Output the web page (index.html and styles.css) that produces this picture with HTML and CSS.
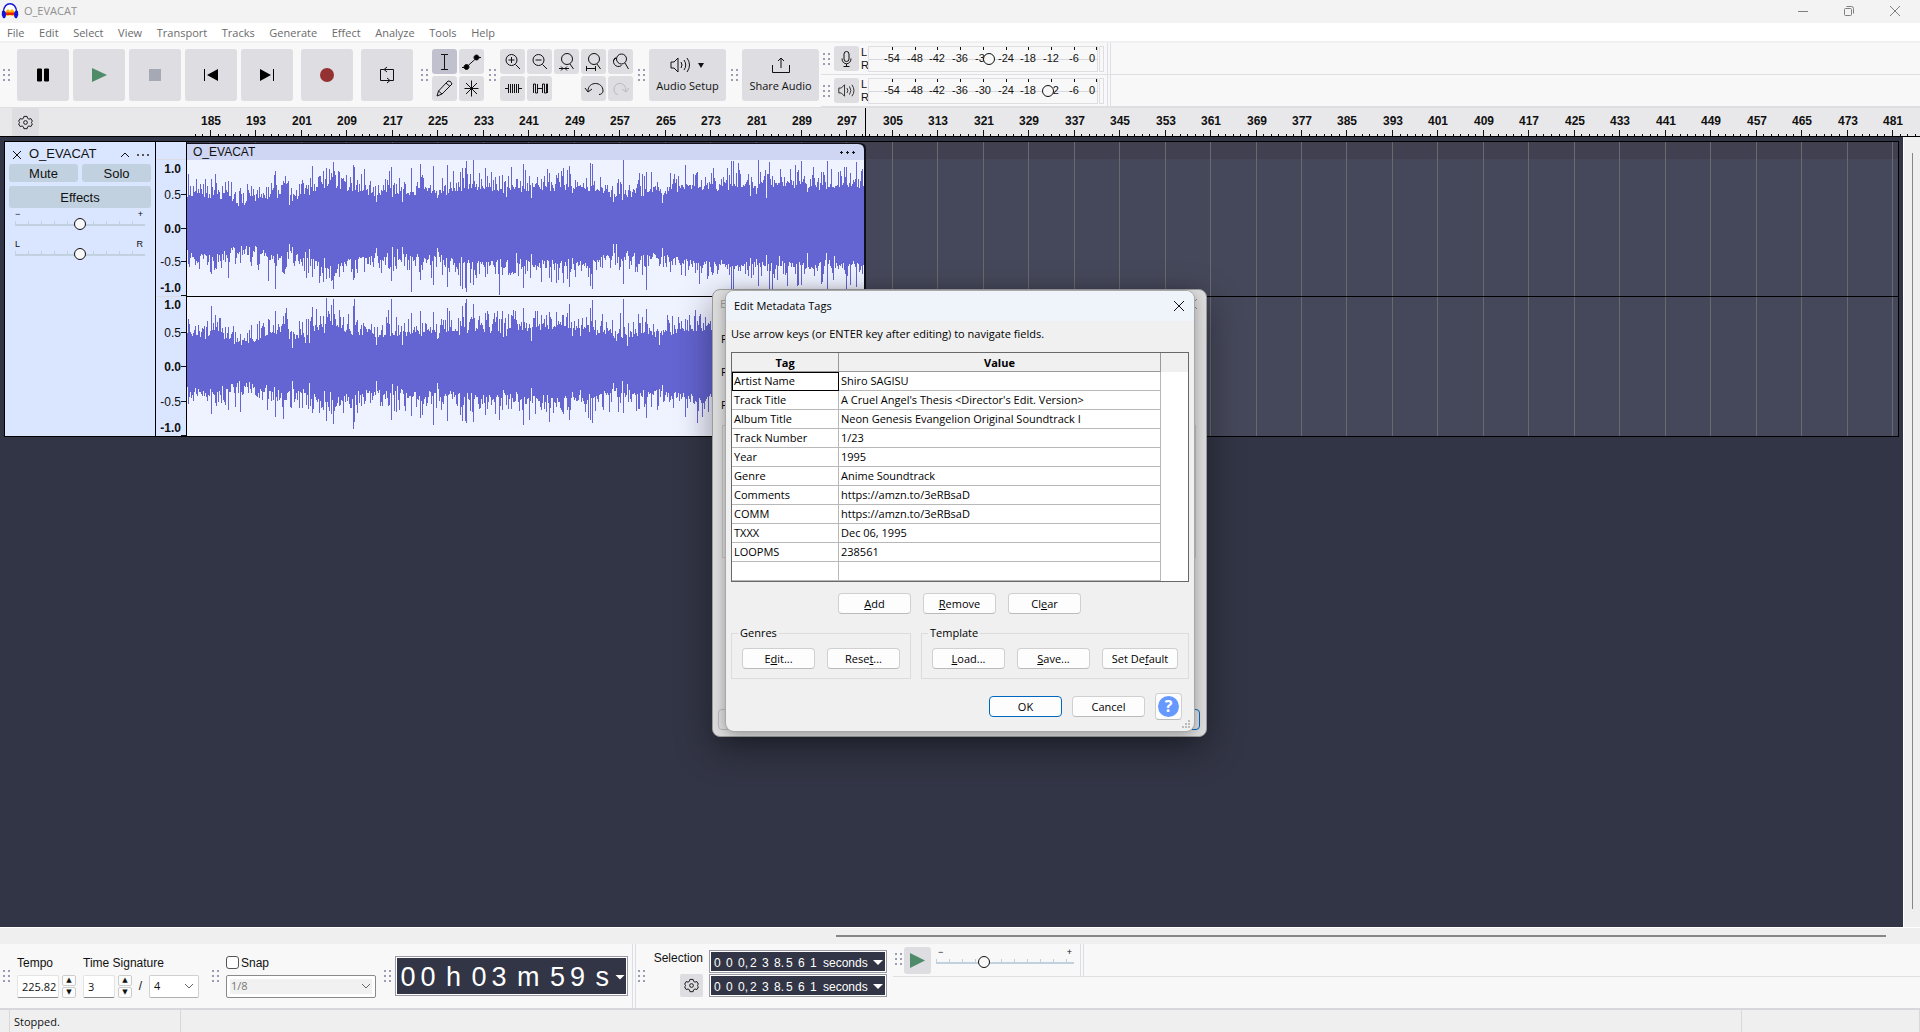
FILE: index.html
```html
<!DOCTYPE html>
<html lang="en">
<head>
<meta charset="utf-8">
<title>O_EVACAT</title>
<link rel="stylesheet" href="styles.css">
</head>
<body>
<svg class="defs" aria-hidden="true">
  <symbol id="i-mag" viewBox="0 0 25 25"><circle cx="11.500" cy="11" r="5.500"/><path d="M15.500 15.500l4.500 4.500"/></symbol>
  <symbol id="i-gear" viewBox="0 0 16 16"><path d="M6.300 1.500h3.400l.5 2 1.500.9 2-.6 1.700 2.900-1.500 1.300 1.500 1.400-1.700 2.900-2-.6-1.500.9-.5 2H6.300l-.5-2-1.500-.9-2 .6L.6 9.400 2.100 8 .6 6.700l1.700-2.900 2 .6 1.500-.9z"/><circle cx="8" cy="8" r="2"/></symbol>
  <symbol id="i-speaker" viewBox="0 0 22 18"><path d="M1 6h3l4-4v14l-4-4H1z"/><path d="M11 6q2 3 0 6M14 4q3.500 5 0 10M17 2q5 7 0 14"/></symbol>
</svg>

<header class="titlebar">
  <svg class="logo" viewBox="0 0 18 18"><path d="M2.500 10c0-11 13-11 13 0" fill="#fff" stroke="#1414d8" stroke-width="1.500"/><path d="M4 10l3-3 2 2 2-2 3 3v3l-3 1-2-1-2 1-3-1z" fill="#ffb000"/><path d="M5 10.500h8v2.500H5z" fill="#e8200c"/><path d="M1 9q4-1 4 3.500T2 16Q0 13 1 9zM17 9q-4-1-4 3.500t3 3.500q2-3 1-7z" fill="#1414d8"/></svg>
  <span>O_EVACAT</span>
  <div class="winbtns">
    <button aria-label="Minimize"><svg viewBox="0 0 12 12"><path d="M1 6.500h10"/></svg></button>
    <button aria-label="Restore"><svg viewBox="0 0 12 12"><rect x="1.500" y="3.500" width="7" height="7" rx="1"/><path d="M3.500 1.500h5a2 2 0 0 1 2 2v5"/></svg></button>
    <button aria-label="Close"><svg viewBox="0 0 12 12"><path d="M1 1l10 10M11 1L1 11"/></svg></button>
  </div>
</header>

<nav class="menubar">
  <div class="menus"><a href="#">File</a><a href="#">Edit</a><a href="#">Select</a><a href="#">View</a><a href="#">Transport</a><a href="#">Tracks</a><a href="#">Generate</a><a href="#">Effect</a><a href="#">Analyze</a><a href="#">Tools</a><a href="#">Help</a></div>
</nav>

<section class="toolbar top">
  <i class="grip"></i>
  <div class="transport">
    <button aria-label="Pause"><svg viewBox="0 0 52 52"><path d="M20.500 20h4v12h-4zM27.500 20h4v12h-4z" stroke="#000" stroke-linejoin="round"/></svg></button>
    <button aria-label="Play"><svg viewBox="0 0 52 52"><path d="M19 19l15 7-15 7z" fill="#4d8b69"/></svg></button>
    <button aria-label="Stop"><svg viewBox="0 0 52 52"><path d="M20 20h12v12H20z" fill="#a5a9b4"/></svg></button>
    <button aria-label="Skip to start"><svg viewBox="0 0 52 52"><path d="M33 20v12l-11-6zM19 20h1v12h-1z"/></svg></button>
    <button aria-label="Skip to end"><svg viewBox="0 0 52 52"><path d="M19 20v12l11-6zM32 20h1v12h-1z"/></svg></button>
    <button class="apart" aria-label="Record"><svg viewBox="0 0 52 52"><circle cx="26" cy="26" r="7" fill="#943232"/></svg></button>
    <button class="apart" aria-label="Loop"><svg viewBox="0 0 52 52"><path d="M23 20.500h-3.500v11h9M29 31.500h3.500v-11h-9M26 18l-3 2.500 3 2.500M26 29l3 2.500-3 2.500" fill="none" stroke="#111"/></svg></button>
  </div>
  <i class="grip g8"></i>
  <div class="tools two">
    <button class="on" aria-label="Selection tool"><svg viewBox="0 0 25 25"><path d="M9 5.500h3.500H16M9 20.500h7M12.500 5.500v15"/></svg></button>
    <button aria-label="Envelope tool"><svg viewBox="0 0 25 25"><path d="M3 18.500h4l11-10h4"/><path d="M7.500 15.500a2.500 2.500 0 1 1-.01 0zM17.500 6a2.500 2.500 0 1 1-.01 0z" fill="#000"/></svg></button>
    <button aria-label="Draw tool"><svg viewBox="0 0 25 25"><path d="M5 20l1.500-5L16 5q3-.5 4 3l-10 10zM6.500 15l3.500 3M14 7l4 3.500"/></svg></button>
    <button aria-label="Multi-tool"><svg viewBox="0 0 25 25"><path d="M12.500 4.500v16M5.500 12.500h14M7 18l11-11M7 7l11 11"/></svg></button>
  </div>
  <i class="grip"></i>
  <div class="tools five">
    <button aria-label="Zoom in"><svg viewBox="0 0 25 25"><use href="#i-mag"/><path d="M8.500 11h6M11.500 8v6"/></svg></button>
    <button aria-label="Zoom out"><svg viewBox="0 0 25 25"><use href="#i-mag"/><path d="M8.500 11h6"/></svg></button>
    <button aria-label="Fit selection"><svg viewBox="0 0 25 25"><circle cx="13" cy="10" r="5.500"/><path d="M16 15l3.500 5M5 19.500h10M7 17.500l2 2-2 2M13 17.500l-2 2 2 2"/></svg></button>
    <button aria-label="Fit project"><svg viewBox="0 0 25 25"><circle cx="13" cy="10" r="5.500"/><path d="M16 15l3.500 5M5.500 19.500h9M5.500 17v5M14.500 17v5"/></svg></button>
    <button aria-label="Zoom toggle"><svg viewBox="0 0 25 25"><circle cx="13.500" cy="10" r="5"/><path d="M7.500 8.500a5 5 0 1 0 6 8M17 14l3.500 6M8 9l-3 3"/></svg></button>
    <button aria-label="Trim"><svg viewBox="0 0 25 25"><path d="M5 12.500h3.500M18.500 12.500H22M8.500 8v9M10.500 8v9M12.500 8v9M14.500 8v9M16.500 8v9M18.500 8v9"/></svg></button>
    <button aria-label="Silence"><svg viewBox="0 0 25 25"><path d="M6.500 17V8h2v9h2V8M10.500 12.500h5M15.500 17V8h2v9h2V8h1v9"/></svg></button>
    <span></span>
    <button aria-label="Undo"><svg viewBox="0 0 25 25"><path d="M7 15c0-10 15-10 15 0 0 2-2 3.500-4 3.500M4 12l3 4 4-3"/></svg></button>
    <button class="off" aria-label="Redo"><svg viewBox="0 0 25 25"><path d="M18 15C18 5 6 5 6 14c0 2 1 4 4 4.500M21 12l-3 4-4-3"/></svg></button>
  </div>
  <i class="grip"></i>
  <button class="wide"><svg class="spk" viewBox="0 0 36 18"><use href="#i-speaker" width="22" height="18"/><path class="fill" d="M28 7h6l-3 5z"/></svg>Audio Setup</button>
  <i class="grip"></i>
  <button class="wide share"><svg viewBox="0 0 20 18"><path d="M1.500 9v7.500h17V9M10 12V2M7 5l3-3 3 3"/></svg>Share Audio</button>
  <div class="meters">
    <div class="meter-row">
      <i class="grip"></i>
      <button class="sq" aria-label="Record meter"><svg viewBox="0 0 25 25"><rect x="10" y="5.500" width="5" height="10" rx="2.500"/><path d="M8 12.500c0 7 9 7 9 0M12.500 18v2.500M9.500 20.500h6"/></svg></button>
      <div class="lr"><span>L</span><span>R</span></div>
      <div class="meter"><input type="range" aria-label="Recording volume" min="0" max="100" value="53"></div>
      <div class="clipbox"></div>
      <i class="edge"></i>
    </div>
    <div class="meter-row">
      <i class="grip"></i>
      <button class="sq" aria-label="Playback meter"><svg viewBox="0 0 25 25"><use href="#i-speaker" x="4" y="5" width="18" height="15"/></svg></button>
      <div class="lr"><span>L</span><span>R</span></div>
      <div class="meter"><input type="range" aria-label="Playback volume" min="0" max="100" value="80"></div>
      <div class="clipbox"></div>
      <i class="edge"></i>
    </div>
  </div>
</section>

<section class="ruler">
  <button class="gearbox" aria-label="Timeline options"><svg viewBox="0 0 16 16"><use href="#i-gear"/></svg></button>
  <svg id="timeline"></svg>
</section>

<main class="workspace">
  <div class="tracks">
    <article class="track">
      <div class="panel">
        <div class="name"><button aria-label="Close track"><svg viewBox="0 0 10 10"><path d="M1 1l8 8M9 1L1 9"/></svg></button><span>O_EVACAT</span><button aria-label="Collapse"><svg viewBox="0 0 10 10"><path d="M1 7l4-4 4 4"/></svg></button><button aria-label="Track menu"><svg class="dots" viewBox="0 0 12 10"><path d="M0 5h2M5 5h2M10 5h2" stroke-width="2"/></svg></button></div>
        <div class="pair"><button>Mute</button><button>Solo</button></div>
        <button class="fx">Effects</button>
        <label class="knob"><span><b>−</b><b>+</b></span><input type="range" aria-label="Gain" value="50"></label>
        <label class="knob pan"><span><b>L</b><b>R</b></span><input type="range" aria-label="Pan" value="50"></label>
      </div>
      <svg id="vruler"></svg>
      <svg id="canvas"></svg>
    </article>
  </div>
  <div class="vscroll"><i></i></div>
  <div class="hscroll"><i></i></div>
</main>

<section class="toolbar bottom">
  <i class="grip"></i>
  <div class="field tempo">
    <label for="tempo">Tempo</label>
    <div class="line"><input id="tempo" type="text" value="225.82"><span class="spin"><button aria-label="Up">▲</button><button aria-label="Down">▼</button></span></div>
  </div>
  <div class="field sig">
    <label for="beats">Time Signature</label>
    <div class="line"><input id="beats" type="text" value="3"><span class="spin"><button aria-label="Up">▲</button><button aria-label="Down">▼</button></span><span class="slash">/</span><select aria-label="Beat unit"><option>4</option></select></div>
  </div>
  <i class="grip g12"></i>
  <div class="field snap">
    <label><input type="checkbox">Snap</label>
    <select aria-label="Snap to" disabled><option>1/8</option></select>
  </div>
  <i class="grip g8"></i>
  <div class="bigtime"><span class="d">0</span><span class="d">0</span><span class="u">h</span><span class="d">0</span><span class="d">3</span><span class="u">m</span><span class="d">5</span><span class="d">9</span><span class="u">s</span><button class="tri" aria-label="Time format"></button></div>
  <i class="edge"></i>
  <i class="grip"></i>
  <div class="selhead"><span>Selection</span><button class="gearbox" aria-label="Selection options"><svg viewBox="0 0 16 16"><use href="#i-gear"/></svg></button></div>
  <div class="seltimes">
    <div class="seltime"><span>0</span><span>0</span><span class="p">0,</span><span>2</span><span>3</span><span class="p">8.</span><span>5</span><span>6</span><span>1</span><em>seconds</em><button class="tri" aria-label="Start format"></button></div>
    <div class="seltime"><span>0</span><span>0</span><span class="p">0,</span><span>2</span><span>3</span><span class="p">8.</span><span>5</span><span>6</span><span>1</span><em>seconds</em><button class="tri" aria-label="End format"></button></div>
  </div>
  <div class="speed">
    <div class="speed-row">
      <i class="grip"></i>
      <button class="play" aria-label="Play at speed"><svg viewBox="0 0 27 27"><path d="M6 6l15 7.500L6 21z"/></svg></button>
      <label class="knob"><span><b>−</b><b>+</b></span><input type="range" aria-label="Playback speed" value="33"></label>
      <i class="edge"></i>
    </div>
  </div>
</section>

<footer class="status"><span class="c1"></span><span class="c2">Stopped.</span><span class="c3"></span><span class="c4"></span></footer>

<div class="window back" aria-hidden="true">
  <div class="wtitle"><span>E</span><svg viewBox="0 0 12 12"><path d="M1 1l10 10M11 1L1 11"/></svg></div>
  <div class="bl"><span>F</span><span>F</span><span>F</span></div>
  <div class="bcombo"></div>
  <div class="bbox"></div>
  <div class="bfoot"><i></i><i class="blue"></i></div>
</div>

<section class="window dialog" role="dialog" aria-labelledby="dlg">
  <div class="wtitle"><span id="dlg">Edit Metadata Tags</span><button aria-label="Close"><svg viewBox="0 0 12 12"><path d="M1 1l10 10M11 1L1 11"/></svg></button></div>
  <div class="content">
    <p>Use arrow keys (or ENTER key after editing) to navigate fields.</p>
    <div class="gridbox">
      <table>
        <thead><tr><th>Tag</th><th>Value</th></tr></thead>
        <tbody>
          <tr><td class="cur">Artist Name</td><td>Shiro SAGISU</td></tr>
          <tr><td>Track Title</td><td>A Cruel Angel's Thesis &lt;Director's Edit. Version&gt;</td></tr>
          <tr><td>Album Title</td><td>Neon Genesis Evangelion Original Soundtrack I</td></tr>
          <tr><td>Track Number</td><td>1/23</td></tr>
          <tr><td>Year</td><td>1995</td></tr>
          <tr><td>Genre</td><td>Anime Soundtrack</td></tr>
          <tr><td>Comments</td><td>https://amzn.to/3eRBsaD</td></tr>
          <tr><td>COMM</td><td>https://amzn.to/3eRBsaD</td></tr>
          <tr><td>TXXX</td><td>Dec 06, 1995</td></tr>
          <tr><td>LOOPMS</td><td>238561</td></tr>
          <tr><td></td><td></td></tr>
        </tbody>
      </table>
    </div>
    <div class="row mid"><button><u>A</u>dd</button><button><u>R</u>emove</button><button>Cl<u>e</u>ar</button></div>
    <div class="groups">
      <fieldset><legend>Genres</legend><button>E<u>d</u>it...</button><button>Rese<u>t</u>...</button></fieldset>
      <fieldset><legend>Template</legend><button><u>L</u>oad...</button><button><u>S</u>ave...</button><button>Set De<u>f</u>ault</button></fieldset>
    </div>
    <div class="row end"><button class="ok">OK</button><button>Cancel</button><button class="help" aria-label="Help"><span>?</span></button></div>
  </div>
  <svg class="sizer" viewBox="0 0 9 9"><path d="M6 0h2v2H6zM3 3h2v2H3zM6 3h2v2H6zM0 6h2v2H0zM3 6h2v2H3zM6 6h2v2H6z"/></svg>
</section>
<script src="app.js"></script>
</body>
</html>
```
FILE: styles.css
```css
* { box-sizing: border-box; }
body {
  margin: 0;
  min-height: 100vh;
  display: flex;
  flex-direction: column;
  position: relative;
  overflow: hidden;
  background: #f8f8f8;
  color: #111;
  font: 12px/16px "Liberation Sans", Arial, sans-serif;
}
button, input, select { font: inherit; color: inherit; margin: 0; padding: 0; }
button { border: 0; background: #dddde2; display: flex; align-items: center; justify-content: center; }
svg { display: block; fill: none; stroke: #111; }
.defs { display: none; }
.fill { fill: #111; stroke: none; }

/* window chrome */
.titlebar { height: 23px; background: #f3f3f3; display: flex; align-items: center; padding: 0 2px 2px 1px; gap: 5px; color: #8f8f8f; font: 11px/16px "Open Sans", sans-serif; }
.logo { width: 18px; height: 18px; stroke: none; }
.winbtns { margin-left: auto; display: flex; }
.winbtns button { width: 46px; height: 21px; background: none; }
.winbtns svg { width: 12px; height: 12px; stroke: #808080; }
.menubar { height: 20px; background: #fff; border-bottom: 2px solid #f0f0f0; font: 11px/20px "Open Sans", sans-serif; padding-left: 7px; }
.menus { display: flex; justify-content: space-between; width: 488px; }
.menubar a { color: #6b6b6b; text-decoration: none; }

/* toolbars */
.toolbar { display: flex; height: 64px; background: #f8f8f8; }
.grip { flex: none; width: 7px; height: 12px; margin: 0 4px 0 5px; align-self: center; background: conic-gradient(from 270deg at 2px 2px, #9c9cb4 90deg, transparent 0) 0 0 / 5px 5px; }
.grip.g8 { margin-left: 8px; }
.edge { flex: none; width: 4px; border: solid #dddde4; border-width: 0 1px; }
.top { align-items: center; }
.toolbar > .grip:first-child { margin: 0 7px 0 3px; }
.top button { border-radius: 3px; }
.transport { display: flex; gap: 4px; }
.transport button { width: 52px; height: 52px; }
.transport svg { width: 52px; height: 52px; fill: #000; stroke: none; }
.transport .apart { margin-left: 4px; }
.tools { display: grid; gap: 2px; grid-template-columns: repeat(2, 25px); grid-auto-rows: 25px; }
.tools.five { grid-template-columns: repeat(5, 25px); }
.tools svg { width: 25px; height: 25px; }
.tools .on { background: #c0c0cf; }
.tools .off svg { stroke: #b8b8be; }
.wide { width: 77px; height: 52px; flex-direction: column; gap: 4px; font: 11px/16px "Open Sans", sans-serif; }
.wide svg { width: 20px; height: 18px; }
.wide .spk { width: 36px; }
.meters { flex: 1; align-self: stretch; margin-left: 2px; display: flex; flex-direction: column; }
.meter-row { height: 32px; display: flex; align-items: center; border-bottom: 1px solid #dfdfe3; }
.meter-row .grip { margin-left: 2px; }
.sq { width: 25px; height: 25px; }
.sq svg { width: 25px; height: 25px; }
.lr { width: 9px; padding-left: 2px; line-height: 13px; font-size: 11px; display: flex; flex-direction: column; }
.meter { width: 230px; height: 26px; border: 1px solid #dddde2; position: relative; }
.meter svg { width: 228px; height: 24px; font-size: 11px; }
.meter input { position: absolute; left: 0; top: 6px; width: 228px; height: 12px; }
.clipbox { width: 5px; height: 26px; margin: 0 3px 0 1px; border: 1px solid #dddde2; }
.meter-row .edge { align-self: stretch; }

input[type=range] { appearance: none; background: none; display: block; margin: 0; }
input[type=range]::-webkit-slider-thumb { appearance: none; width: 12px; height: 12px; border: 1px solid #111; border-radius: 50%; background: #f8f8f8; }

/* timeline */
.ruler { height: 30px; background: #e8e8ea; border-top: 1px solid #dfdfe3; border-bottom: 1px solid #000; display: flex; padding-left: 12px; }
.gearbox { width: 27px; height: 28px; border-radius: 2px; }
.gearbox svg { width: 15px; height: 15px; }
#timeline { flex: 1; min-width: 0; height: 28px; margin-left: 148px; font: bold 12px "Liberation Sans", Arial, sans-serif; }
svg text { fill: #111; stroke: none; }

/* tracks */
.workspace { flex: 1; display: grid; grid-template: 1fr 17px / 1fr 17px; background: #efefef; }
.tracks { background: #323545; padding: 4px 4px 0; }
.track { display: flex; height: 296px; border: 1px solid #000; }
.panel { width: 151px; background: #dae6ff; border-right: 1px solid #000; padding: 3px 4px 0; display: flex; flex-direction: column; font-size: 13px; }
.panel button { border-radius: 3px; background: #c2d1df; padding-top: 1px; }
.name { display: flex; align-items: center; height: 18px; gap: 4px; }
.name span { flex: 1; }
.panel .name button { background: none; }
.name svg { width: 10px; height: 10px; margin: 0 3px; }
.name svg.dots { width: 12px; margin: 0 2px 0 0; stroke: #555; }
.pair { display: flex; gap: 4px; margin-top: 1px; }
.pair button { flex: 1; height: 18px; }
.fx { height: 22px; margin: 4px 0 2px; }
.knob { display: flex; flex-direction: column; }
.knob span { display: flex; justify-content: space-between; padding: 0 2px; font-size: 9px; line-height: 8px; }
.knob input { width: 100%; height: 12px; background: linear-gradient(#c2d1df, #c2d1df) 0 6px / 100% 2px no-repeat, repeating-linear-gradient(90deg, #c2d1df 0 1px, transparent 1px 13px) 0 3px / 100% 3px no-repeat; }
.panel .knob { padding: 0 6px 10px; }
.panel .knob span { padding: 0 2px 0 0; }
.knob b { font-weight: normal; -webkit-text-stroke: 0; }
#vruler { width: 30px; height: 294px; flex: none; background: #dae6ff; font: 12px "Liberation Sans", Arial, sans-serif; }
#canvas { flex: 1; min-width: 0; height: 294px; background: #45485a; border-left: 1px solid #000; }
.vscroll { display: flex; padding: 16px 7px 18px 8px; border-left: 1px solid #fff; }
.vscroll i { flex: 1; background: #868686; }
.hscroll { grid-column: 1 / 3; border-top: 1px solid #fff; padding: 7px 34px 7px 836px; display: flex; }
.hscroll i { flex: 1; background: #868686; }

/* bottom bar */
.field { display: flex; flex-direction: column; justify-content: center; gap: 4px; }
.field label { display: flex; align-items: center; height: 16px; }
.line { display: flex; align-items: center; }
.field input[type=text] { width: 42px; height: 23px; border: 1px solid #e4e4e4; border-bottom-color: #868686; border-radius: 2px; background: #fff; padding-left: 4px; font: 11px/16px "Open Sans", sans-serif; }
.tempo { width: 66px; }
.sig input[type=text] { width: 32px; }
.spin { display: flex; flex-direction: column; gap: 1px; margin-left: 3px; }
.spin button { width: 14px; height: 11px; border: 1px solid #ccc; border-radius: 2px; background: #fcfcfc; font: 7px/8px "DejaVu Sans", sans-serif; }
.slash { width: 17px; text-align: center; }
.field select { appearance: none; height: 23px; width: 50px; padding-left: 4px; border: 1px solid #d0d0d0; border-bottom-color: #b0b0b0; border-radius: 2px; font: 11px/16px "Open Sans", sans-serif; background: #fff url("data:image/svg+xml,%3Csvg xmlns='http://www.w3.org/2000/svg' width='10' height='6'%3E%3Cpath d='M1 1l4 4 4-4' fill='none' stroke='%23666'/%3E%3C/svg%3E") right 4px center no-repeat; }
.snap { gap: 4px; }
.snap input { appearance: none; width: 13px; height: 13px; border: 1px solid #555; border-radius: 3px; background: #fff; margin-right: 2px; }
.field.snap select { width: 150px; border-color: #8a8a8a; opacity: 1; color: #777; background-color: #f1f1f1; box-shadow: inset 0 0 0 3px #fff; }
.bigtime { width: 233px; height: 40px; align-self: center; margin-right: 4px; border: 1px solid #9a9aa4; box-shadow: inset 0 0 0 1px #fff; background: #323545; color: #fff; display: flex; align-items: center; padding: 2px 0 0 2px; font-size: 27px; line-height: 36px; }
.bigtime .d { width: 20px; text-align: center; }
.bigtime .u { padding: 0 8px; }
.bigtime .u:nth-last-child(2) { flex: 1; padding-right: 0; }
.tri { flex: none; width: 10px; height: 5px; background: #fff; clip-path: polygon(0 0, 100% 0, 50% 100%); margin-right: 2px; }
.bottom > .grip.g12 { margin: 0 7px 0 13px; }
.bottom > .edge + .grip { margin: 0 7px 0 2px; }
.selhead { width: 51px; display: flex; flex-direction: column; align-items: flex-end; justify-content: center; gap: 8px; padding-bottom: 6px; }
.selhead .gearbox { width: 23px; height: 23px; }
.seltimes { margin-left: 6px; display: flex; flex-direction: column; justify-content: center; gap: 1px; padding-bottom: 5px; }
.seltime { width: 178px; height: 23px; border: 1px solid #9a9aa4; box-shadow: inset 0 0 0 1px #fff; background: #323545; color: #fff; display: flex; align-items: center; padding: 2px 1px 0 3px; }
.seltime span { width: 12px; flex: none; padding-left: 1px; }
.seltime em { font-style: normal; margin-left: 2px; flex: 1; }
.speed { flex: 1; margin-left: 6px; }
.speed-row { height: 33px; display: flex; align-items: center; border-bottom: 1px solid #dfdfe3; }
.speed-row .grip { margin: 9px 2px 0; align-self: flex-start; }
.play { width: 27px; height: 27px; border-radius: 3px; }
.play svg { width: 27px; height: 27px; fill: #4d8b69; stroke: none; }
.speed .knob { width: 138px; margin: 0 6px 4px 5px; }
.speed-row .edge { align-self: stretch; }
.status { height: 24px; background: #efefef; border-top: 2px solid #d8d8dc; display: flex; font: 11px/24px "Open Sans", sans-serif; }
.status span { border-right: 1px solid #d8d8d8; height: 22px; }
.c1 { width: 10px; }
.c2 { width: 171px; padding-left: 4px; }
.c3 { flex: 1; }
.c4 { width: 178px; }

/* dialogs */
.window { position: absolute; border-radius: 8px; background: #f0f0f0; font: 11px/16px "Open Sans", sans-serif; color: #000; }
.back { left: calc(50% - 248px); top: 289px; width: 495px; height: 448px; background: #dcdcdc; border: 1px solid #9b9b9b; box-shadow: 0 12px 36px rgba(0, 0, 0, .4); padding: 0 6px 6px 5px; display: flex; flex-direction: column; }
.back .wtitle { color: #999; padding: 0 2px; height: 28px; }
.back .wtitle svg { stroke: #888; }
.bl { display: flex; flex-direction: column; gap: 17px; padding: 13px 3px 0; }
.bcombo { height: 18px; margin: -58px 5px 0 0; border-right: 1px solid #aaa; }
.bbox { height: 133px; margin: 52px 4px 0; border: 1px solid #c2c2c2; }
.bfoot { margin-top: auto; padding-top: 0; display: flex; justify-content: space-between; position: relative; }
.bfoot i { width: 73px; height: 21px; border: 1px solid #b8b8b8; border-radius: 4px; }
.bfoot .blue { border-color: #0067c0; }
.dialog { left: calc(50% - 234px); top: 291px; width: 468px; box-shadow: 0 0 0 1px #a8a8a8, 0 3px 14px rgba(0, 0, 0, .35); overflow: hidden; }
.wtitle { display: flex; align-items: center; justify-content: space-between; height: 30px; }
.wtitle svg { width: 12px; height: 12px; }
.dialog .wtitle { background: #eff3fa; padding: 0 9px 0 8px; }
.dialog .wtitle button { background: none; }
.content { padding: 5px 5px 11px; }
.content p { margin: 0 0 10px; }
.gridbox { border: 1px solid #696969; background: linear-gradient(#f0f0f0 19px, #fff 0); }
table { width: 429px; border-collapse: separate; border-spacing: 0; table-layout: fixed; }
th, td { height: 19px; padding: 0 0 0 2px; line-height: 16px; text-align: left; border: solid #b8b8b8; border-width: 0 1px 1px 0; white-space: nowrap; background: #fff; }
th { background: #f0f0f0; text-align: center; border-color: #999; font-weight: bold; padding: 1px 0 0; }
th:first-child { width: 107px; }
.cur { outline: 1px solid #000; outline-offset: -1px; }
.content button { height: 21px; min-width: 73px; background: #fdfdfd; border: 1px solid #d0d0d0; border-bottom-color: #bbb; border-radius: 4px; display: block; text-align: center; line-height: 16px; }
.row { display: flex; gap: 12px; align-items: center; }
.mid { justify-content: center; margin: 11px 0; padding-right: 1px; }
.groups { display: flex; gap: 10px; }
fieldset { margin: 0; border: 1px solid #dcdcdc; padding: 7px 10px 9px; display: flex; gap: 12px; }
legend { padding: 0 2px; margin-left: -4px; line-height: 16px; }
fieldset + fieldset { flex: 1; }
fieldset button:nth-of-type(3) { min-width: 76px; }
.end { justify-content: flex-end; gap: 10px; margin-top: 14px; padding-right: 7px; }
.content .ok { border-color: #0067c0; }
.content .help { min-width: 27px; height: 27px; padding: 2px; }
.help span { display: block; width: 21px; height: 21px; border-radius: 50%; background: #6699ff; color: #fff; font: bold 16px/21px "Open Sans", sans-serif; }
.sizer { position: absolute; right: 3px; bottom: 2px; width: 9px; height: 9px; fill: #bcbcbc; stroke: none; }
```
FILE: app.js
```js
const NS = 'http://www.w3.org/2000/svg';
function add(svg, tag, attrs, text) {
  const el = document.createElementNS(NS, tag);
  for (const k in attrs) el.setAttribute(k, attrs[k]);
  if (text !== undefined) el.textContent = text;
  svg.appendChild(el);
  return el;
}
const FIRST = 185, STEP = 8, UNIT = 5.6824, ORIGIN = 23;
const beatX = v => Math.round(ORIGIN + (v - FIRST) * UNIT);
const CLIP = 677;

// timeline ruler
const tl = document.getElementById('timeline');
const tlWidth = tl.clientWidth;
for (let i = -2; ; i++) {
  const x = Math.round(ORIGIN + i * STEP * UNIT / 6);
  if (x > tlWidth) break;
  const major = i % 6 === 0;
  add(tl, 'path', { d: `M${x + .5} ${major ? 22 : 26}V28` });
  if (major) {
    add(tl, 'text', { x: x + 1, y: 17, 'text-anchor': 'middle' }, FIRST + i / 6 * STEP);
  }
}
add(tl, 'path', { d: `M${CLIP + 1.5} 0V28`, stroke: '#000' });

// amplitude ruler
const vr = document.getElementById('vruler');
[['1.0', 26, 1], ['0.5', 52, 0], ['0.0', 86, 1], ['-0.5', 119, 0], ['-1.0', 145, 1],
 ['1.0', 162, 1], ['0.5', 190, 0], ['0.0', 224, 1], ['-0.5', 259, 0], ['-1.0', 285, 1]].forEach(([t, y, b]) =>
  add(vr, 'text', { x: 25, y: y + 5, 'text-anchor': 'end', 'font-weight': b ? 'bold' : 'normal' }, t));
[52, 86, 119, 153, 190, 224, 259, 293].forEach(y => add(vr, 'path', { d: `M25 ${y + .5}h5` }));
add(vr, 'path', { d: 'M0 17.5h31M0 154.5h31', stroke: '#dcdce4' });

// clip canvas
const cv = document.getElementById('canvas');
const w = cv.clientWidth;
add(cv, 'rect', { x: 0, y: 0, width: w, height: 17, fill: '#404050', stroke: 'none' });
for (let v = FIRST; beatX(v) < w; v += STEP) add(cv, 'path', { d: `M${beatX(v) + .5} 0V294`, stroke: '#686a70' });
add(cv, 'path', { d: `M0 1h${CLIP - 4}q6 0 6 6V294H0z`, fill: '#10101c', stroke: 'none' });
add(cv, 'path', { d: `M0 2h${CLIP - 6}q6 0 6 6v10H0z`, fill: '#ced6f3', stroke: 'none' });
add(cv, 'rect', { x: 0, y: 18, width: CLIP, height: 276, fill: '#eff2ff', stroke: 'none' });
add(cv, 'text', { x: 6, y: 14, 'font-size': 12 }, 'O_EVACAT');
[653, 659, 665].forEach(x => add(cv, 'path', { d: `M${x} 10.5h3M${x + 1.5} 9v3`, stroke: '#111' }));

let seed = 7;
const rnd = () => (seed = (seed * 16807) % 2147483647) / 2147483647;
const env = [[0, 36], [40, 34], [48, 26], [62, 28], [90, 35], [110, 33], [125, 38], [135, 48], [145, 46], [160, 38], [195, 35], [240, 38], [300, 41], [400, 43], [418, 36], [460, 35], [500, 41], [560, 44], [677, 44]];
const level = x => {
  let i = 1;
  while (i < env.length - 1 && env[i][0] < x) i++;
  const [a, p] = env[i - 1], [b, q] = env[i];
  return p + (q - p) * Math.min(1, (x - a) / (b - a));
};
const shared = Array.from({ length: CLIP }, () => rnd());
function wave(centre, up, down, scale) {
  let d = '';
  for (let x = 0; x < CLIP; x++) {
    const l = level(x) * scale;
    const s = shared[x];
    const boost = s > .955 ? 22 : s > .87 ? 11 : s < .05 ? -9 : 0;
    const t = Math.min(up - 3 * rnd(), l - 6 + 5 * rnd() - 7 * Math.log(1 - rnd() * .96) + boost);
    const b = Math.min(down - 8 * rnd(), l - 12 + 5 * rnd() - 7 * Math.log(1 - rnd() * .96) + boost);
    d += `M${x + .5} ${Math.round(centre - t)}V${Math.round(centre + b)}`;
  }
  add(cv, 'path', { d, stroke: '#6464d2', 'shape-rendering': 'crispEdges' });
}
wave(86, 69, 68, 1);
wave(224, 69, 69, .93);
add(cv, 'path', { d: `M0 154.5H${w}`, stroke: '#000' });

// level meters
document.querySelectorAll('.meter').forEach(m => {
  const svg = document.createElementNS(NS, 'svg');
  m.prepend(svg);
  add(svg, 'path', { d: 'M0 12.5h228', stroke: '#d8d8de' });
  for (let i = 0; i < 10; i++) {
    const x = Math.round(23 + i * 22.7);
    add(svg, 'path', { d: `M${x + .5} 0v3` });
    add(svg, 'text', { x: i === 9 ? x - 4 : x, y: 15, 'text-anchor': 'middle' }, i === 9 ? '0' : String(i * 6 - 54));
  }
});
```
